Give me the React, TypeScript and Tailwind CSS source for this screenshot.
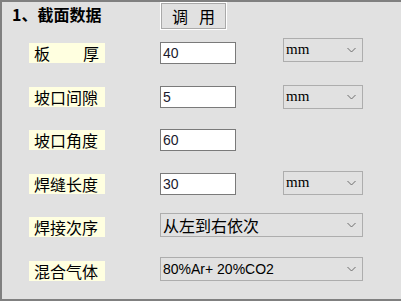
import React from 'react';

const cjk = "font-['Noto_Sans_CJK_SC',sans-serif]";

function Chevron() {
  return (
    <svg className="absolute right-[6px] top-1/2 -translate-y-1/2" width="9" height="5" viewBox="0 0 9 5">
      <path d="M0.5 0.5 L4.5 4.5 L8.5 0.5" fill="none" stroke="#6d6d6d" strokeWidth="1" />
    </svg>
  );
}

function Label({ text, spread }: { text: string; spread?: boolean }) {
  if (spread) {
    const chars = text.split('');
    return (
      <div className={`w-[76px] h-[20px] bg-[#ffffe0] flex justify-between items-center pl-[5px] pr-[6px] text-[16px] leading-[20px] text-black ${cjk}`}>
        {chars.map((c) => (
          <span key={c}>{c}</span>
        ))}
      </div>
    );
  }
  return (
    <div className={`w-[76px] h-[20px] bg-[#ffffe0] flex items-center pl-[5px] text-[16px] leading-[20px] text-black ${cjk}`}>
      {text}
    </div>
  );
}

function Input({ value }: { value: string }) {
  return (
    <div className="w-[76px] h-[22px] bg-white border border-[#7a7a7a] flex items-center pl-[2px] text-[14px] leading-none text-[#1a1a2e] font-['Liberation_Sans',Arial,sans-serif]">
      {value}
    </div>
  );
}

function UnitSelect({ className = '' }: { className?: string }) {
  return (
    <div className={`relative w-[80px] h-[24px] bg-[#e1e1e1] border border-[#adadad] flex items-center pl-[2px] text-[15px] leading-none text-black font-['Liberation_Serif','Times_New_Roman',serif] ${className}`}>
      mm
      <Chevron />
    </div>
  );
}

function WideSelect({ children, className = '' }: { children: React.ReactNode; className?: string }) {
  return (
    <div className={`relative w-[203px] h-[24px] bg-[#e1e1e1] border border-[#adadad] flex items-center pl-[2px] text-black ${className}`}>
      {children}
      <Chevron />
    </div>
  );
}

export default function App() {
  return (
    <div className="w-[401px] h-[301px] bg-[#e1e1e1] border-t-2 border-l-2 border-b-2 border-[#808080] overflow-hidden pt-[1px]">
      <div className="flex items-start h-[26px]">
        <div className={`w-[159px] pl-[10px] mt-[1px] text-[16px] leading-[20px] font-bold text-black ${cjk}`}>1、截面数据</div>
        <div className={`w-[65px] h-[26px] border border-[#a9a9a9] outline outline-1 outline-white flex items-center justify-center gap-[11px] text-[16px] text-black ${cjk}`}>
          <span>调</span>
          <span>用</span>
        </div>
      </div>

      <div className="mt-[2.2px] pl-[27px] flex flex-col">
        <div className="h-[43.6px] flex items-center">
          <Label text="板厚" spread />
          <div className="ml-[55px]"><Input value="40" /></div>
          <UnitSelect className="ml-[47px] mb-[6px]" />
        </div>
        <div className="h-[43.6px] flex items-center">
          <Label text="坡口间隙" />
          <div className="ml-[55px]"><Input value="5" /></div>
          <UnitSelect className="ml-[47px]" />
        </div>
        <div className="h-[43.6px] flex items-center">
          <Label text="坡口角度" />
          <div className="ml-[55px]"><Input value="60" /></div>
        </div>
        <div className="h-[43.6px] flex items-center">
          <Label text="焊缝长度" />
          <div className="ml-[55px]"><Input value="30" /></div>
          <UnitSelect className="ml-[47px] mb-[2px]" />
        </div>
        <div className="h-[43.6px] flex items-center">
          <Label text="焊接次序" />
          <WideSelect className={`ml-[55px] mb-[4px] text-[16px] leading-none ${cjk}`}>从左到右依次</WideSelect>
        </div>
        <div className="h-[43.6px] flex items-center">
          <Label text="混合气体" />
          <WideSelect className="ml-[55px] mb-[4px] text-[14px] leading-none font-['Liberation_Sans',Arial,sans-serif]">
            80%Ar+ 20%CO2
          </WideSelect>
        </div>
      </div>
    </div>
  );
}
